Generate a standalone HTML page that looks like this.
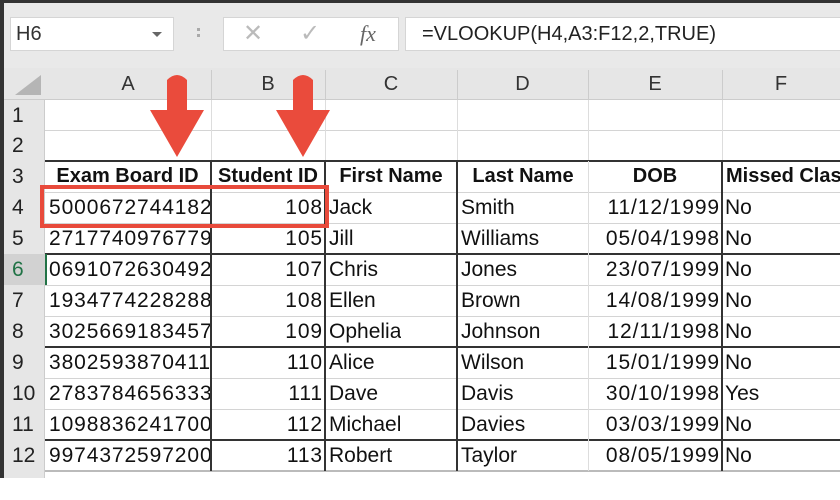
<!DOCTYPE html>
<html><head><meta charset="utf-8"><style>
*{margin:0;padding:0;box-sizing:border-box}
body{width:840px;height:500px;overflow:hidden;background:#fff;position:relative;font-family:"Liberation Sans",sans-serif;color:#111}
.a{position:absolute}
.t{position:absolute;font-size:21px;line-height:31px;white-space:nowrap;overflow:hidden}
.n{letter-spacing:0.9px}
.h{font-weight:bold;font-size:20px}
.hl{position:absolute;left:45px;width:795px;height:1px;background:#d4d4d4}
.dk{background:#333;height:2px}
.vl{position:absolute;top:161px;height:310px;width:2px;background:#333}
.ch{position:absolute;top:68px;height:32px;line-height:32px;text-align:center;font-size:20px;color:#333}
.rn{position:absolute;left:4px;width:41px;text-align:left;padding-left:8px;font-size:21px;line-height:31px;color:#222}
</style></head><body>
<div class="a" style="left:0;top:0;width:840px;height:3px;background:#333"></div>
<div class="a" style="left:0;top:3px;width:840px;height:65px;background:#e9e9e9"></div>
<div class="a" style="left:0;top:0;width:4px;height:478px;background:#333"></div>
<div class="a" style="left:10px;top:17px;width:164px;height:34px;background:#fff;border:1px solid #d5d5d5"></div>
<div class="a" style="left:16px;top:17px;font-size:20px;line-height:34px;color:#333">H6</div>
<div class="a" style="left:152px;top:32px;width:0;height:0;border-left:5px solid transparent;border-right:5px solid transparent;border-top:5px solid #666"></div>
<div class="a" style="left:197px;top:28px;width:3px;height:3px;background:#aaa;box-shadow:0 6px 0 #aaa"></div>
<div class="a" style="left:223px;top:17px;width:176px;height:34px;background:#fff;border:1px solid #d5d5d5"></div>
<div class="a" style="left:243px;top:18px;font-size:24px;line-height:32px;color:#bbb">✕</div>
<div class="a" style="left:300px;top:18px;font-size:24px;line-height:32px;color:#bbb">✓</div>
<div class="a" style="left:360px;top:17px;font-size:22px;line-height:34px;color:#666;font-family:'Liberation Serif',serif;font-style:italic">fx</div>
<div class="a" style="left:405px;top:17px;width:440px;height:34px;background:#fff;border:1px solid #d5d5d5"></div>
<div class="a" style="left:422px;top:17px;font-size:20px;line-height:34px;color:#222">=VLOOKUP(H4,A3:F12,2,TRUE)</div>
<div class="a" style="left:4px;top:68px;width:836px;height:32px;background:#e6e6e6;border-bottom:1px solid #ccc"></div>
<div class="a" style="left:4px;top:100px;width:41px;height:378px;background:#e6e6e6;border-right:1px solid #ccc"></div>
<div class="a" style="left:4px;top:254px;width:41px;height:31px;background:#d2d2d2"></div>
<div class="a" style="left:15px;top:75px;width:0;height:0;border-left:26px solid transparent;border-bottom:20px solid #b5b5b5"></div>
<div class="ch" style="left:45px;width:166px">A</div>
<div class="ch" style="left:211px;width:114px">B</div>
<div class="ch" style="left:325px;width:132px">C</div>
<div class="ch" style="left:457px;width:131px">D</div>
<div class="ch" style="left:588px;width:134px">E</div>
<div class="ch" style="left:722px;width:118px">F</div>
<div class="a" style="left:211px;top:70px;width:1px;height:30px;background:#ccc"></div>
<div class="a" style="left:325px;top:70px;width:1px;height:30px;background:#ccc"></div>
<div class="a" style="left:457px;top:70px;width:1px;height:30px;background:#ccc"></div>
<div class="a" style="left:588px;top:70px;width:1px;height:30px;background:#ccc"></div>
<div class="a" style="left:722px;top:70px;width:1px;height:30px;background:#ccc"></div>
<div class="rn" style="top:100px">1</div><div class="rn" style="top:130px">2</div><div class="rn" style="top:161px">3</div>
<div class="rn" style="top:192px">4</div><div class="rn" style="top:223px">5</div><div class="rn" style="top:254px;color:#217346">6</div>
<div class="rn" style="top:285px">7</div><div class="rn" style="top:316px">8</div><div class="rn" style="top:347px">9</div>
<div class="rn" style="top:378px">10</div><div class="rn" style="top:409px">11</div><div class="rn" style="top:440px">12</div>
<div class="hl" style="top:130px"></div>
<div class="a" style="left:211px;top:100px;width:1px;height:61px;background:#ddd"></div>
<div class="a" style="left:325px;top:100px;width:1px;height:61px;background:#ddd"></div>
<div class="a" style="left:457px;top:100px;width:1px;height:61px;background:#ddd"></div>
<div class="a" style="left:588px;top:100px;width:1px;height:61px;background:#ddd"></div>
<div class="a" style="left:722px;top:100px;width:1px;height:61px;background:#ddd"></div>
<div class="hl dk" style="top:160px"></div>
<div class="hl" style="top:192px"></div>
<div class="hl" style="top:223px"></div>
<div class="hl dk" style="top:253px"></div>
<div class="hl" style="top:285px"></div>
<div class="hl" style="top:316px"></div>
<div class="hl dk" style="top:346px"></div>
<div class="hl" style="top:378px"></div>
<div class="hl" style="top:409px"></div>
<div class="hl dk" style="top:439px"></div>
<div class="hl" style="top:470px;background:#bbb;height:2px"></div>
<div class="vl" style="left:210px"></div><div class="vl" style="left:324px"></div><div class="vl" style="left:456px"></div>
<div class="a" style="left:588px;top:161px;width:1px;height:310px;background:#ddd"></div>
<div class="vl" style="left:721px"></div>
<div class="a" style="left:45px;top:254px;width:2px;height:31px;background:#217346"></div>
<div class="t h" style="left:45px;top:161px;width:165px;text-align:center">Exam Board ID</div>
<div class="t h" style="left:212px;top:161px;width:112px;text-align:center">Student ID</div>
<div class="t h" style="left:326px;top:161px;width:130px;text-align:center">First Name</div>
<div class="t h" style="left:458px;top:161px;width:130px;text-align:center">Last Name</div>
<div class="t h" style="left:589px;top:161px;width:132px;text-align:center">DOB</div>
<div class="t h" style="left:726px;top:161px;width:114px">Missed Class</div>
<div class="t n" style="left:49px;top:192px;width:161px">5000672744182500</div>
<div class="t n" style="left:49px;top:223px;width:161px">2717740976779200</div>
<div class="t n" style="left:49px;top:254px;width:161px">0691072630492700</div>
<div class="t n" style="left:49px;top:285px;width:161px">1934774228288700</div>
<div class="t n" style="left:49px;top:316px;width:161px">3025669183457200</div>
<div class="t n" style="left:49px;top:347px;width:161px">3802593870411000</div>
<div class="t n" style="left:49px;top:378px;width:161px">2783784656333400</div>
<div class="t n" style="left:49px;top:409px;width:161px">1098836241700000</div>
<div class="t n" style="left:49px;top:440px;width:161px">9974372597200100</div>
<div class="t n" style="left:212px;top:192px;width:111px;text-align:right">108</div>
<div class="t n" style="left:212px;top:223px;width:111px;text-align:right">105</div>
<div class="t n" style="left:212px;top:254px;width:111px;text-align:right">107</div>
<div class="t n" style="left:212px;top:285px;width:111px;text-align:right">108</div>
<div class="t n" style="left:212px;top:316px;width:111px;text-align:right">109</div>
<div class="t n" style="left:212px;top:347px;width:111px;text-align:right">110</div>
<div class="t n" style="left:212px;top:378px;width:111px;text-align:right">111</div>
<div class="t n" style="left:212px;top:409px;width:111px;text-align:right">112</div>
<div class="t n" style="left:212px;top:440px;width:111px;text-align:right">113</div>
<div class="t" style="left:329px;top:192px">Jack</div><div class="t" style="left:329px;top:223px">Jill</div>
<div class="t" style="left:329px;top:254px">Chris</div><div class="t" style="left:329px;top:285px">Ellen</div>
<div class="t" style="left:329px;top:316px">Ophelia</div><div class="t" style="left:329px;top:347px">Alice</div>
<div class="t" style="left:329px;top:378px">Dave</div><div class="t" style="left:329px;top:409px">Michael</div>
<div class="t" style="left:329px;top:440px">Robert</div>
<div class="t" style="left:461px;top:192px">Smith</div><div class="t" style="left:461px;top:223px">Williams</div>
<div class="t" style="left:461px;top:254px">Jones</div><div class="t" style="left:461px;top:285px">Brown</div>
<div class="t" style="left:461px;top:316px">Johnson</div><div class="t" style="left:461px;top:347px">Wilson</div>
<div class="t" style="left:461px;top:378px">Davis</div><div class="t" style="left:461px;top:409px">Davies</div>
<div class="t" style="left:461px;top:440px">Taylor</div>
<div class="t n" style="left:589px;top:192px;width:131px;text-align:right">11/12/1999</div>
<div class="t n" style="left:589px;top:223px;width:131px;text-align:right">05/04/1998</div>
<div class="t n" style="left:589px;top:254px;width:131px;text-align:right">23/07/1999</div>
<div class="t n" style="left:589px;top:285px;width:131px;text-align:right">14/08/1999</div>
<div class="t n" style="left:589px;top:316px;width:131px;text-align:right">12/11/1998</div>
<div class="t n" style="left:589px;top:347px;width:131px;text-align:right">15/01/1999</div>
<div class="t n" style="left:589px;top:378px;width:131px;text-align:right">30/10/1998</div>
<div class="t n" style="left:589px;top:409px;width:131px;text-align:right">03/03/1999</div>
<div class="t n" style="left:589px;top:440px;width:131px;text-align:right">08/05/1999</div>
<div class="t" style="left:725px;top:192px">No</div><div class="t" style="left:725px;top:223px">No</div>
<div class="t" style="left:725px;top:254px">No</div><div class="t" style="left:725px;top:285px">No</div>
<div class="t" style="left:725px;top:316px">No</div><div class="t" style="left:725px;top:347px">No</div>
<div class="t" style="left:725px;top:378px">Yes</div><div class="t" style="left:725px;top:409px">No</div>
<div class="t" style="left:725px;top:440px">No</div>
<div class="a" style="left:40px;top:185px;width:289px;height:43px;border:4px solid #e84a3b"></div>
<svg class="a" style="left:0;top:0" width="840" height="200">
<g fill="#ea4b3c">
<path d="M167 80 Q177 70 187 80 L187 110 L204 110 L177 157 L150 110 L167 110 Z"/>
<path d="M293 80 Q303 70 313 80 L313 110 L330 110 L303 157 L276 110 L293 110 Z"/>
</g></svg>
</body></html>
